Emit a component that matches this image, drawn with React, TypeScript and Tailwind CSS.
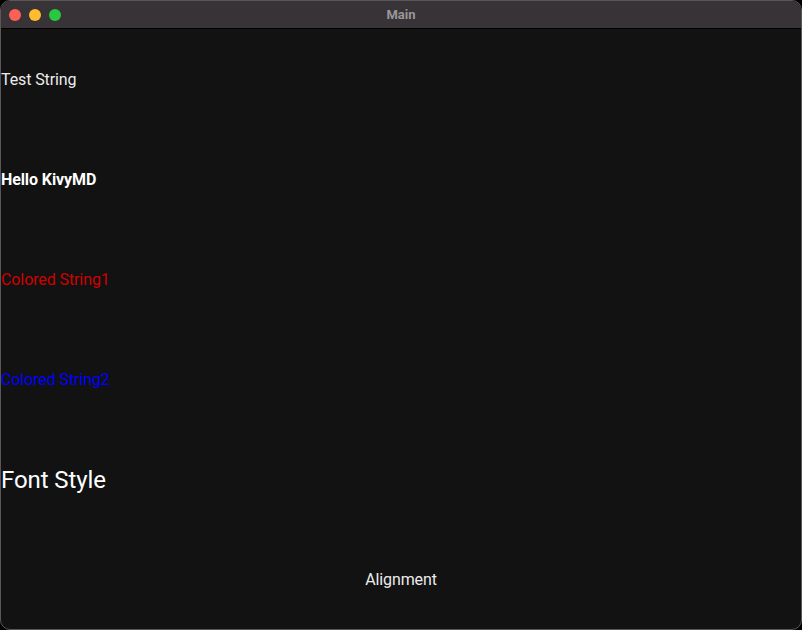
export default function App() {
    return (
        <div className="w-[802px] h-[630px] bg-black" style={{ fontFamily: "Roboto, 'Liberation Sans', sans-serif" }}>
            <div className="w-full h-full flex flex-col rounded-[10px] overflow-hidden border border-[#5a5658] bg-[#121212]">
                {/* 타이틀 바 */}
                <header className="h-[28px] shrink-0 flex items-center relative bg-[#383336] border-b border-black">
                    <div className="flex gap-[8px] pl-[8px]">
                        <span className="size-[12px] rounded-full bg-[#fe5f57]" />
                        <span className="size-[12px] rounded-full bg-[#febc2e]" />
                        <span className="size-[12px] rounded-full bg-[#28c840]" />
                    </div>
                    <p className="absolute inset-0 flex items-center justify-center text-[13px] font-bold text-[#9b9699]">
                        Main
                    </p>
                </header>
                <main className="flex-1 flex flex-col text-[16px] tracking-[-0.1px]">
                    <div className="h-[100px] pt-[2px] flex items-center text-[#ececec]">Test String</div>
                    <div className="h-[100px] pt-[2px] flex items-center font-bold text-white">Hello KivyMD</div>
                    <div className="h-[100px] pt-[2px] flex items-center text-[#d00000]">Colored String1</div>
                    <div className="h-[100px] pt-[2px] flex items-center text-[#0000ff]">Colored String2</div>
                    <div className="h-[100px] pt-[2px] flex items-center text-[24px] text-white">Font Style</div>
                    <div className="h-[100px] pt-[2px] flex items-center justify-center text-[#ececec]">Alignment</div>
                </main>
            </div>
        </div>
    );
}
